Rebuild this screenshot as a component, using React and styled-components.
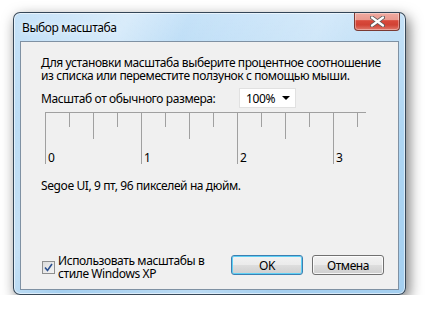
import styled, { createGlobalStyle } from "styled-components";

const Global = createGlobalStyle`
body {
  margin: 0;
  padding: 12px 0 0 13px;
  background: #ffffff;
  font-family: "Noto Sans", "Open Sans", sans-serif;
  font-size: 12px;
  letter-spacing: -0.4px;
  color: #000;
}
`

const Window = styled.div`
width: 393px;
height: 283px;
box-sizing: border-box;
border: 1px solid rgba(30, 45, 60, 0.85);
border-radius: 7px;
padding: 0 6px 4px 6px;
display: flex;
flex-direction: column;
background:
  linear-gradient(115deg, rgba(255,255,255,0) 0%, rgba(255,255,255,0.35) 22%, rgba(255,255,255,0) 34%, rgba(255,255,255,0.25) 60%, rgba(255,255,255,0) 75%),
  linear-gradient(180deg, #c6e2f8 0%, #afd6f3 40%, #a4cff0 100%);
box-shadow: 3px 5px 14px rgba(0, 0, 0, 0.55), inset 0 0 0 1px rgba(255,255,255,0.55);
`

const TitleBar = styled.div`
height: 28px;
display: flex;
align-items: flex-start;
justify-content: space-between;
`

const Title = styled.div`
padding: 8px 0 0 2px;
line-height: 13px;
text-shadow: 0 0 6px rgba(255,255,255,0.9);
`

const Close = styled.div`
width: 46px;
height: 18px;
margin-right: -1px;
box-sizing: border-box;
border: 1px solid #7b3a33;
border-top: none;
border-radius: 0 0 4px 4px;
display: flex;
align-items: center;
justify-content: center;
background: linear-gradient(180deg, #efaaa0 0%, #e99a8f 40%, #d9493b 45%, #d14234 70%, #e0786b 100%);
box-shadow: inset 0 0 0 1px rgba(255,255,255,0.35);
`

const Client = styled.div`
flex: 1;
border: 1px solid #7f91a3;
background: #f0f0f0;
display: flex;
flex-direction: column;
padding: 14px 14px 9px 20px;
line-height: 13px;
white-space: nowrap;
`

const Text = styled.div`
margin-top: ${p => p.$top || 0}px;
`

const Row = styled.div`
margin-top: 6px;
height: 20px;
display: flex;
align-items: center;
`

const Label = styled.div`
width: 198px;
`

const Combo = styled.div`
width: 57px;
height: 20px;
box-sizing: border-box;
border: 1px solid #e1e1e1;
background: #fff;
display: flex;
align-items: center;
justify-content: space-between;
padding: 0 5px 0 6px;
`

const Arrow = styled.div`
width: 0;
height: 0;
border-left: 4px solid transparent;
border-right: 4px solid transparent;
border-top: 4px solid #000;
`

const Ruler = styled.div`
margin: 4px 0 0 4px;
width: 321px;
height: 52px;
border-top: 1px solid #a0a0a0;
box-sizing: border-box;
`

const TickRow = styled.div`
display: flex;
gap: 23px;
align-items: flex-start;
`

const Tick = styled.div`
position: relative;
width: 1px;
height: ${p => p.$major ? 51 : p.$mid ? 26 : 14}px;
background: #a0a0a0;
`

const TickLabel = styled.span`
position: absolute;
left: 3px;
bottom: 0;
line-height: 13px;
`

const Footer = styled.div`
margin-top: auto;
display: flex;
align-items: flex-start;
`

const CheckGroup = styled.div`
display: flex;
align-items: center;
gap: 3px;
margin-left: 1px;
`

const Box = styled.div`
width: 13px;
height: 13px;
box-sizing: border-box;
border: 1px solid #8e8f8f;
background: linear-gradient(135deg, #dcdcdc 0%, #f4f4f4 100%);
display: flex;
align-items: center;
justify-content: center;
`

const Buttons = styled.div`
margin-left: auto;
margin-top: 1px;
display: flex;
gap: 9px;
`

const Button = styled.div`
width: 72px;
height: 20px;
box-sizing: border-box;
border: 1px solid ${p => p.$default ? "#3c7fb1" : "#707070"};
border-radius: 3px;
display: flex;
align-items: center;
justify-content: center;
background: linear-gradient(180deg, #f2f2f2 0%, #ebebeb 48%, #dddddd 52%, #cfcfcf 100%);
box-shadow: inset 0 0 0 1px ${p => p.$default ? "#5fd0f5" : "rgba(255,255,255,0.8)"};
`

const ticks = Array.from({ length: 14 }, (_, i) => i)

export default function App() {
  return (
    <>
      <Global />
      <Window>
        <TitleBar>
          <Title>Выбор масштаба</Title>
          <Close>
            <svg width="15" height="11" viewBox="0 0 15 11">
              <path d="M2 1.5 L13 9.5 M13 1.5 L2 9.5" stroke="#5a5a5a" strokeWidth="4" strokeLinecap="round" />
              <path d="M2 1.5 L13 9.5 M13 1.5 L2 9.5" stroke="#ffffff" strokeWidth="2.2" strokeLinecap="round" />
            </svg>
          </Close>
        </TitleBar>
        <Client>
          <Text>
            Для установки масштаба выберите процентное соотношение<br />
            из списка или переместите ползунок с помощью мыши.
          </Text>
          <Row>
            <Label>Масштаб от обычного размера:</Label>
            <Combo>
              <span>100%</span>
              <Arrow />
            </Combo>
          </Row>
          <Ruler>
            <TickRow>
              {ticks.map(i => (
                <Tick key={i} $major={i % 4 === 0} $mid={i % 4 === 2}>
                  {i % 4 === 0 && <TickLabel>{i / 4}</TickLabel>}
                </Tick>
              ))}
            </TickRow>
          </Ruler>
          <Text $top={15}>Segoe UI, 9 пт, 96 пикселей на дюйм.</Text>
          <Footer>
            <CheckGroup>
              <Box>
                <svg width="9" height="9" viewBox="0 0 9 9">
                  <path d="M1 4.5 L3.5 7.5 L8 1" fill="none" stroke="#2a4f8f" strokeWidth="1.6" />
                </svg>
              </Box>
              <div>Использовать масштабы в<br />стиле Windows XP</div>
            </CheckGroup>
            <Buttons>
              <Button $default>OK</Button>
              <Button>Отмена</Button>
            </Buttons>
          </Footer>
        </Client>
      </Window>
    </>
  )
}
